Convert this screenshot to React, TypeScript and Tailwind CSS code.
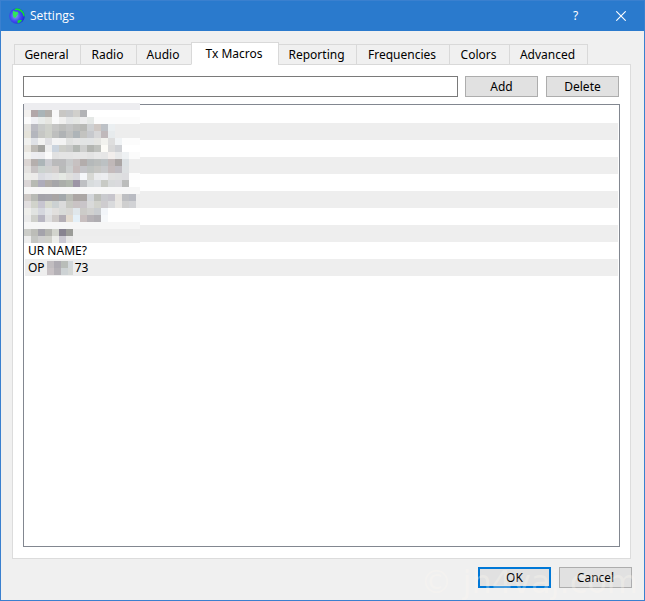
import { useState } from "react";
import clsx from "clsx";

const TABS = [
  { name: "General", width: "w-[67px]" },
  { name: "Radio", width: "w-[57px]" },
  { name: "Audio", width: "w-14" },
  { name: "Tx Macros", width: "w-[88px]" },
  { name: "Reporting", width: "w-[79px]" },
  { name: "Frequencies", width: "w-[94px]" },
  { name: "Colors", width: "w-[61px]" },
  { name: "Advanced", width: "w-[79px]" },
];

// one string per row of blocks, one hex colour per block
const BLOCKS = [
  "ededf0 ededf0 ededf0 ededf0 ededf0 ededf0 ededf0 ededf0 ededf0 ededf0 ededf0 ededf0 ededf0 ededf0 ededf0 ededf0 ededf0",
  "f3f1ef b2a7a9 a9b4b7 b2afab f8f8f8 c8c7c4 c6c8ca d1d0cc b2b3b6",
  "fcfcfc f0f0f4 e8ebe9 e6e6e1 fafafa f0f0ef e3e5e6 e5e7e4 ededee e5e8e6 fcfcfc fcfcfc fcfcfc fcfcfc fcfcfc fcfcfc fcfcfc",
  "e4e3e0 bbbbc2 c8cac9 cfd1cb c5c5c4 bdbebc c3c4c4 bcbdbb b8b9b6 cfd1d3 cfc8c4 bdc1c6 ebeff1 ededed ededed ededed ededed",
  "e5e3da b4b6bd c6c7c4 cfd1ca bebfbe b0b3b5 bfc0bf aeb4b8 c3c3c0 c7c9cd d7d7d8 c0b9bb e7ebed ededed ededed ededed ededed",
  "f1f1ef dfe1e6 f2f2f1 e0e0e3 f4f4f4 f3f3f3 e0e1e0 e5e5e5 e2e4e4 e2e4e5 e5e5e2 f2f2ee dedede f0f3f5 fcfcfc fcfcfc fcfcfc",
  "e8e5df bebbb6 a5a5a2 eeeeee cbd4de cdcec9 c9cac9 b3b7b3 cecfce b3b5b1 bfc1bd fcfbf6 d9d9d9 cfd1d5",
  "f3f3f1 ededf1 ececef fafafa e1e1e1 e4e4e4 e4e4e4 e6e6e6 e6e6e6 e3e3e3 e8e8e8 e6e6e6 f2eeec e8e9ea eef1f3 fbfbfb fbfbfb",
  "dbd5d3 b5afad acb5b8 cbcbd0 bababb bababc c8cacb c7c1c1 b3adac b5b9ba babdbc bcc1c3 c0b8b8 aaa5a4 dbe0e3 ededed ededed",
  "e4e2e0 c7c3c4 cbd2cf cfd0cf d3cecd b9bbba cccfcf c7bdbd c4c4c8 bfc3c1 c6c6c3 c8c9cb c4bbbc bfbcc2 dde0e2 ededed ededed",
  "ededea ecebea dadbe1 e0e1e5 e3e3e3 e5e9e4 dfdfdd dbdbdf f5f7fa d7d8d4 eaebed ecedf0 e0e0e0 dedfe0 dddde0 fdfdfd fdfdfd",
  "dbd6d7 b7bab3 aeacbb b0aca9 a6a6a9 abaeaa b0b6ad 9d95a5 bec0c3 d8dcdd dcdfe2 c8cac5 d8dadb dadadd bcbdbc",
  "f7f7f7 f7f7f7 f7f7f7 f7f7f7 f7f7f7 f7f7f7 f7f7f7 f7f7f7 f7f7f7 f7f7f7 f7f7f7 f7f7f7 f7f7f7 f7f7f7 f7f7f7 f7f7f7 f7f7f7",
  "cfcac7 b8bab5 a4a3aa a6a5ab a9a5a4 a3a8ab b9bbb5 aca6a4 aba7a5 d3d6da bdbfba c9cace c7c5cc e8e5e1 bebfc2 b9bbc2 ededed",
  "e2dfe0 d1d3cb c7c5d0 d8dad0 ccd1d2 dbdbdb c8c9c3 c9c3c4 c9c5c9 d9dada d2d3cd cecccf d9dadc e9e7e4 cfcfcf d1d2d5 ededed",
  "efefec e1e3e1 d5d7de e3e5e7 e1dfdd d9dbd9 d9d8d5 e0e7eb cccbc8 d1d1cf cacdd0 f2f5f9",
  "ebebeb cfd0cb b8b6c2 dfdfe0 cfcbc9 b3aeb5 e3dbd0 e4f0f8 c8bfbf b6b2b6 afadb1 f6f8fa",
  "f6f6f6 f6f6f6 f6f6f6 f6f6f6 f6f6f6 f6f6f6 f6f6f6 f6f6f6 f6f6f6 f6f6f6 f6f6f6 f6f6f6 f6f6f6 f6f6f6 f6f6f6 f6f6f6 f6f6f6",
  "cccdc9 bcbdb8 a4a3ab b4b5b0 d2d4cd 878390 9b9c98 ededed ededed ededed ededed ededed ededed ededed ededed ededed ededed",
  "eeeeee c4c6c3 cfcfcf d0d1cb ecedea cac8d1 e6e6e6 eeeeee eeeeee eeeeee eeeeee eeeeee eeeeee eeeeee eeeeee eeeeee eeeeee",
];

const CALL_BLOCKS = ["c1bdc0 aeabb2 b9bdb9 d3d8dc", "c8c2c5 b4b1b6 cdd2d4 d5d8d6"];

function Mosaic({ rows, width, className }: { rows: string[]; width: number; className?: string }) {
  const height = rows.length * 7;
  return (
    <svg
      width={width}
      height={height}
      viewBox={`0 0 ${width} ${height}`}
      shapeRendering="crispEdges"
      className={className}
      aria-hidden="true"
    >
      {rows.map((row, y) =>
        row.split(" ").map((color, x) => (
          <rect key={`${x}-${y}`} x={x * 7} y={y * 7} width="7" height="7" fill={`#${color}`} />
        ))
      )}
    </svg>
  );
}

function GlobeIcon() {
  return (
    <svg width="16" height="16" viewBox="0 0 16 16" aria-hidden="true">
      <defs>
        <radialGradient id="sea" cx="0.4" cy="0.5" r="0.6">
          <stop offset="0" stopColor="#8f9cfa" />
          <stop offset="0.5" stopColor="#4653f2" />
          <stop offset="1" stopColor="#2026d8" />
        </radialGradient>
      </defs>
      <circle cx="8" cy="8" r="7.8" fill="url(#sea)" />
      <path
        d="M4 2.500 6.200 3.800 8.800 4 9.300 6 8 7l-.8 2-1.400 1-1.600-1.400-.5-2.600Z"
        fill="#2fe85c"
      />
      <path
        d="M5 1.300 8 .3l3 .7 2.600 1.900 1.700 2.800.4 2.800-1.200-.3-.9-2.700-1.800-1.900L9.500 2.300 6.500 2Z"
        fill="#10e828"
      />
      <path d="m8.500 12.600 2.800-.6 1.900.3-1.800 2-2.700 1Z" fill="#10e828" />
    </svg>
  );
}

function DialogButton({ label, primary }: { label: string; primary?: boolean }) {
  return (
    <button
      type="button"
      className={clsx(
        "flex h-[21px] w-[73px] shrink-0 items-center justify-center bg-[#e1e1e1]",
        primary ? "border-2 border-[#0078d7]" : "border border-[#adadad]"
      )}
    >
      {label}
    </button>
  );
}

export default function App() {
  const [active, setActive] = useState("Tx Macros");
  const [macro, setMacro] = useState("");

  return (
    <div className="relative flex min-h-screen flex-col overflow-hidden border border-[#3a80cf] bg-[#f0f0f0] font-['Noto_Sans',sans-serif] text-[12px] leading-4 text-black">
      <header className="flex h-[30px] items-center bg-[#2a7acd] pl-2 text-white">
        <GlobeIcon />
        <h1 className="ml-[5px] flex-1 font-['Open_Sans',sans-serif]">Settings</h1>
        <button type="button" aria-label="Help" className="flex h-full w-[45px] items-center justify-center">
          ?
        </button>
        <button type="button" aria-label="Close" className="flex h-full w-[46px] items-center justify-center">
          <svg width="10" height="10" viewBox="0 0 10 10" stroke="currentColor" strokeWidth="1.1" aria-hidden="true">
            <path d="m.3.3 9.400 9.400M9.700.3.3 9.700" />
          </svg>
        </button>
      </header>

      <main className="flex flex-1 flex-col pt-[11px] pr-[13px] pl-[11px]">
        <div role="tablist" className="z-10 -mb-px flex items-end pl-0.5">
          {TABS.map(({ name, width }) => (
            <button
              key={name}
              type="button"
              role="tab"
              aria-selected={name === active}
              onClick={() => setActive(name)}
              className={clsx(
                "-mr-px flex shrink-0 items-center justify-center border border-[#d9d9d9] pr-0.5",
                width,
                name === active ? "h-[23px] border-b-white bg-white" : "h-[21px]"
              )}
            >
              {name}
            </button>
          ))}
        </div>

        <section
          role="tabpanel"
          aria-label={active}
          className="flex flex-1 flex-col gap-[7px] border border-[#dcdcdc] bg-white px-2.5 py-[11px]"
        >
          <div className="flex gap-2 pr-px">
            <input
              type="text"
              aria-label="New macro"
              value={macro}
              onChange={(e) => setMacro(e.target.value)}
              className="-mr-px h-[21px] min-w-0 flex-1 border border-[#7a7a7a] bg-white px-1 outline-none"
            />
            <DialogButton label="Add" />
            <DialogButton label="Delete" />
          </div>

          <div className="relative flex-1 border border-[#828790] p-px">
            <ul>
              {BLOCKS.slice(0, 8).map((_, i) => (
                <li key={i} className="h-[17px] even:bg-[#eeeeee]" />
              ))}
              <li className="h-[17px] px-[3px] leading-[17px]">UR NAME?</li>
              <li className="flex h-[17px] items-center bg-[#eeeeee] px-[3px] leading-[17px]">
                OP
                <Mosaic rows={CALL_BLOCKS} width={26} className="mr-0.5 ml-0.5" />
                73
              </li>
            </ul>
            <Mosaic rows={BLOCKS} width={116} className="absolute -top-0.5 left-0" />
          </div>
        </section>
      </main>

      <footer className="flex justify-end gap-2 pt-2 pr-3 pb-3">
        <DialogButton label="OK" primary />
        <DialogButton label="Cancel" />
      </footer>

      <span className="pointer-events-none absolute right-1.5 bottom-0 font-['DejaVu_Sans',sans-serif] text-[32px] leading-9 whitespace-nowrap text-[#fffaf2]/30">
        © jh4vaj.com
      </span>
    </div>
  );
}
